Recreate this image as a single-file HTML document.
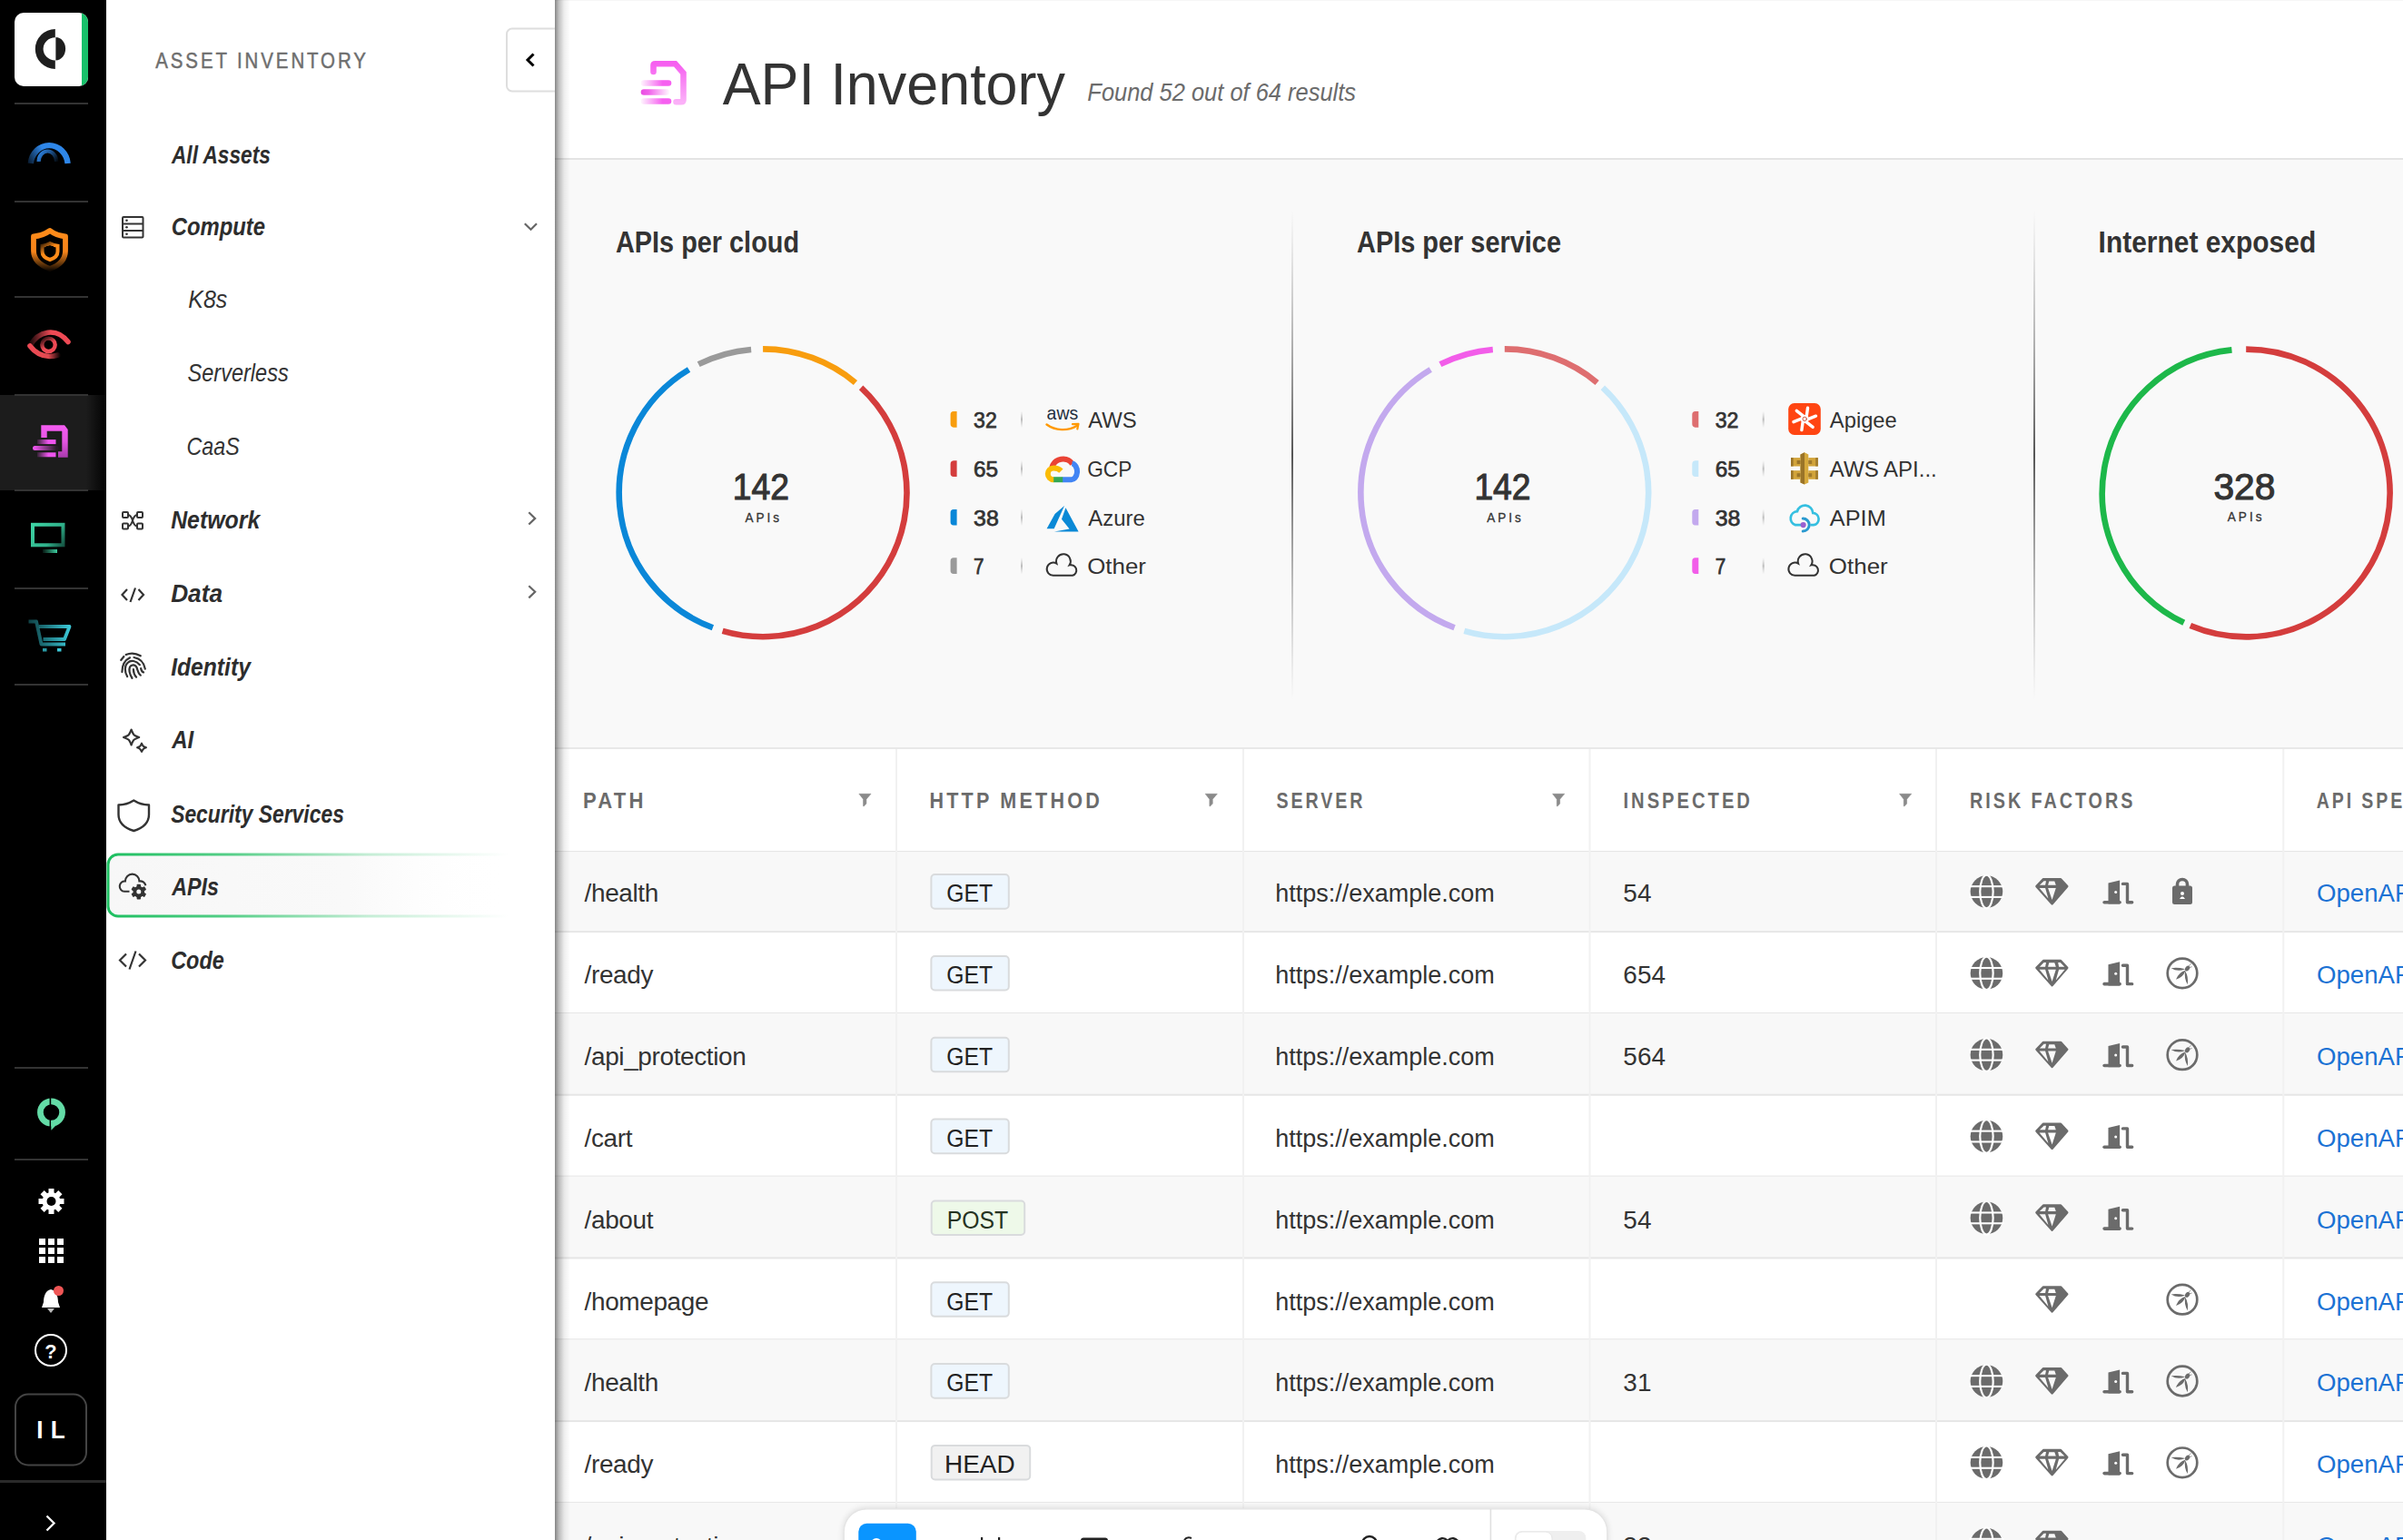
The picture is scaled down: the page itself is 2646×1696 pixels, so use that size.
<!DOCTYPE html>
<html><head><meta charset="utf-8"><title>API Inventory</title>
<style>html,body{margin:0;padding:0;background:#fff;overflow:hidden}svg{display:block}text{font-family:"Liberation Sans", sans-serif}</style></head>
<body><svg width="2646" height="1696" viewBox="0 0 2646 1696">
<rect x="0" y="0" width="117" height="1696" fill="#000" /><defs><linearGradient id="hl" gradientUnits="userSpaceOnUse" x1="95" x2="115" y1="0" y2="0"><stop offset="0" stop-color="#1c1c1c"/><stop offset="1" stop-color="#050505"/></linearGradient></defs><rect x="0" y="435" width="117" height="105" fill="url(#hl)" /><rect x="16" y="113" width="81" height="2" fill="#333" /><rect x="16" y="221" width="81" height="2" fill="#333" /><rect x="16" y="326" width="81" height="2" fill="#333" /><rect x="16" y="434" width="81" height="2" fill="#333" /><rect x="16" y="539" width="81" height="2" fill="#333" /><rect x="16" y="647" width="81" height="2" fill="#333" /><rect x="16" y="753" width="81" height="2" fill="#333" /><rect x="16" y="1175" width="81" height="2" fill="#333" /><rect x="16" y="1276" width="81" height="2" fill="#333" /><rect x="0" y="1630" width="117" height="3" fill="#2a2a2a" /><clipPath id="lg"><rect x="16" y="14" width="81" height="81" rx="10"/></clipPath><g clip-path="url(#lg)"><rect x="16" y="14" width="81" height="81" fill="#fff"/><rect x="90" y="14" width="7" height="81" fill="#18c06a"/></g><path d="M60.8 32 A22 22 0 0 0 60.8 76 V66.4 A13.2 12.6 0 0 1 60.8 41.2 Z" fill="#1e1e1e"/><path d="M61.4 41.1 A10.7 12.65 0 0 1 61.4 66.4 Z" fill="#1e1e1e"/><defs><linearGradient id="gb1" gradientUnits="userSpaceOnUse" x1="30" y1="180" x2="66" y2="160"><stop offset="0" stop-color="#2e86e8" stop-opacity="0.15"/><stop offset="0.55" stop-color="#2e86e8"/><stop offset="1" stop-color="#2e86e8"/></linearGradient><linearGradient id="gb2" gradientUnits="userSpaceOnUse" x1="44" y1="165" x2="63" y2="178"><stop offset="0" stop-color="#2e86e8"/><stop offset="0.5" stop-color="#2e86e8" stop-opacity="0.6"/><stop offset="1" stop-color="#2e86e8" stop-opacity="0.05"/></linearGradient><linearGradient id="go1" gradientUnits="userSpaceOnUse" x1="0" y1="252" x2="0" y2="298"><stop offset="0" stop-color="#ff8c1a"/><stop offset="0.55" stop-color="#f7841a"/><stop offset="1" stop-color="#ff8c1a" stop-opacity="0.05"/></linearGradient><linearGradient id="go2" gradientUnits="userSpaceOnUse" x1="46" y1="266" x2="60" y2="286"><stop offset="0" stop-color="#ff8c1a" stop-opacity="0.1"/><stop offset="0.5" stop-color="#ff8c1a"/><stop offset="1" stop-color="#ff8c1a"/></linearGradient><linearGradient id="gr1" gradientUnits="userSpaceOnUse" x1="34" y1="0" x2="74" y2="0"><stop offset="0" stop-color="#ee4a55" stop-opacity="0.15"/><stop offset="0.55" stop-color="#ee4a55"/><stop offset="1" stop-color="#ee4a55"/></linearGradient><linearGradient id="gr2" gradientUnits="userSpaceOnUse" x1="34" y1="0" x2="66" y2="0"><stop offset="0" stop-color="#ee4a55"/><stop offset="0.6" stop-color="#e04a50"/><stop offset="1" stop-color="#ee4a55" stop-opacity="0.05"/></linearGradient><linearGradient id="gr3" gradientUnits="userSpaceOnUse" x1="46" y1="371" x2="58" y2="389"><stop offset="0" stop-color="#ee4a55" stop-opacity="0.05"/><stop offset="0.55" stop-color="#ee4a55"/><stop offset="1" stop-color="#ee4a55"/></linearGradient><linearGradient id="gp1" gradientUnits="userSpaceOnUse" x1="0" y1="468" x2="0" y2="504"><stop offset="0" stop-color="#f55cf2"/><stop offset="0.5" stop-color="#e455e2"/><stop offset="1" stop-color="#a83aac"/></linearGradient><linearGradient id="gp2" gradientUnits="userSpaceOnUse" x1="40" y1="0" x2="62" y2="0"><stop offset="0" stop-color="#ee55ee" stop-opacity="0.05"/><stop offset="0.6" stop-color="#ee55ee"/><stop offset="1" stop-color="#ee55ee"/></linearGradient><linearGradient id="gp3" gradientUnits="userSpaceOnUse" x1="38" y1="0" x2="62" y2="0"><stop offset="0" stop-color="#ee55ee"/><stop offset="1" stop-color="#ee55ee" stop-opacity="0.05"/></linearGradient><linearGradient id="gm1" gradientUnits="userSpaceOnUse" x1="34" y1="576" x2="72" y2="606"><stop offset="0" stop-color="#3fd6a6"/><stop offset="0.6" stop-color="#2fb08a"/><stop offset="1" stop-color="#1a6a55" stop-opacity="0.6"/></linearGradient><linearGradient id="gm2" gradientUnits="userSpaceOnUse" x1="46" y1="0" x2="64" y2="0"><stop offset="0" stop-color="#3fd6a6" stop-opacity="0.05"/><stop offset="1" stop-color="#3fd6a6"/></linearGradient><linearGradient id="gc1" gradientUnits="userSpaceOnUse" x1="31" y1="0" x2="77" y2="0"><stop offset="0" stop-color="#2ab5c0" stop-opacity="0.35"/><stop offset="1" stop-color="#3cc8d8"/></linearGradient></defs><path d="M33.8 180 A20.5 22 0 0 1 74.6 180" fill="none" stroke="url(#gb1)" stroke-width="6.4"/><path d="M42.6 178 A9.8 11.5 0 0 1 62.2 178" fill="none" stroke="url(#gb2)" stroke-width="4.2"/><path d="M55 254 C50 257.5 43 260 37 260.5 V276 C37 286 45 292.5 55 296 C65 292.5 72 286 72 276 V260.5 C66 260 59.5 257.5 55 254 Z" fill="none" stroke="url(#go1)" stroke-width="5.8" stroke-linejoin="round"/><path d="M55 268 C52 269.5 49 270.5 46.5 270.8 V277 C46.5 281.5 50 284.5 55 286 C60 284.5 63.5 281.5 63.5 277 V270.8 C61 270.5 58 269.5 55 268 Z" fill="none" stroke="url(#go2)" stroke-width="4"/><path d="M50.5 271 H59 L55 279.5 Z" fill="#000"/><path d="M33 381 C42 364 62 360 75 376.5" fill="none" stroke="url(#gr1)" stroke-width="5.5" stroke-linecap="round"/><path d="M33 381 C40 390 50 395 64 391" fill="none" stroke="url(#gr2)" stroke-width="5.5" stroke-linecap="round"/><circle cx="53.5" cy="379.8" r="7.2" fill="none" stroke="url(#gr3)" stroke-width="4.4"/><circle cx="53" cy="378.5" r="3.2" fill="#000"/><path d="M48.5 482 V471.5 H69.5 L71.5 474 V500.5 H64" fill="none" stroke="url(#gp1)" stroke-width="6.4" stroke-linejoin="miter"/><path d="M41 486.6 H61.5" stroke="url(#gp2)" stroke-width="5"/><path d="M38.5 493.6 H62" stroke="url(#gp3)" stroke-width="5" stroke-linecap="round"/><path d="M41 500.8 H61.5" stroke="url(#gp2)" stroke-width="5"/><rect x="36" y="577.8" width="33.5" height="22.5" fill="none" stroke="url(#gm1)" stroke-width="4"/><path d="M47 607 H63" stroke="url(#gm2)" stroke-width="4"/><g fill="none" stroke="url(#gc1)" stroke-width="3.8" stroke-linejoin="round"><path d="M31.5 684.5 H40 L45.5 709.5 H72"/><path d="M43 690 H76.5 L71 704 H47.5"/></g><rect x="47" y="714" width="4.5" height="3.5" fill="#2a9aa5"/><rect x="63" y="714" width="4.5" height="3.5" fill="#3cc8d8"/><circle cx="56.5" cy="1225" r="12.1" fill="none" stroke="#63dba6" stroke-width="6.7"/><rect x="54.6" y="1209" width="1.6" height="9" fill="#000"/><rect x="54.6" y="1232" width="1.6" height="10" fill="#000"/><path d="M56.2 1234 L63.5 1234 L61 1240 L56.4 1244.8 Z" fill="#63dba6"/><g transform="translate(56.5 1323)"><circle r="10" fill="#fff"/><rect x="-3" y="-14" width="6" height="6" fill="#fff" transform="rotate(0)"/><rect x="-3" y="-14" width="6" height="6" fill="#fff" transform="rotate(45)"/><rect x="-3" y="-14" width="6" height="6" fill="#fff" transform="rotate(90)"/><rect x="-3" y="-14" width="6" height="6" fill="#fff" transform="rotate(135)"/><rect x="-3" y="-14" width="6" height="6" fill="#fff" transform="rotate(180)"/><rect x="-3" y="-14" width="6" height="6" fill="#fff" transform="rotate(225)"/><rect x="-3" y="-14" width="6" height="6" fill="#fff" transform="rotate(270)"/><rect x="-3" y="-14" width="6" height="6" fill="#fff" transform="rotate(315)"/><circle r="5" fill="#000"/></g><rect x="43" y="1364" width="7" height="7" fill="#fff" /><rect x="43" y="1374" width="7" height="7" fill="#fff" /><rect x="43" y="1384" width="7" height="7" fill="#fff" /><rect x="53" y="1364" width="7" height="7" fill="#fff" /><rect x="53" y="1374" width="7" height="7" fill="#fff" /><rect x="53" y="1384" width="7" height="7" fill="#fff" /><rect x="63" y="1364" width="7" height="7" fill="#fff" /><rect x="63" y="1374" width="7" height="7" fill="#fff" /><rect x="63" y="1384" width="7" height="7" fill="#fff" /><path d="M56 1420 C50 1421 48 1428 48 1434 L46 1440 H66 L64 1434 C64 1428 62 1421 56 1420 Z" fill="#fff"/><path d="M52 1441 H60 L56 1446 Z" fill="#bbb"/><circle cx="64.5" cy="1421.5" r="5.5" fill="#ee5555"/><circle cx="56" cy="1487" r="17" fill="none" stroke="#fff" stroke-width="2"/><rect x="17" y="1535.5" width="78" height="78" rx="14" fill="none" stroke="#444" stroke-width="2"/><path d="M51.5 1669.5 L59.5 1677.5 L51.5 1685.5" fill="none" stroke="#fff" stroke-width="2.3"/><rect x="117" y="0" width="494" height="1696" fill="#fff" /><rect x="558" y="31.5" width="70" height="69" rx="6" fill="#fff" stroke="#dedede" stroke-width="2"/><path d="M587.5 59.5 L581 66 L587.5 72.5" fill="none" stroke="#000" stroke-width="3"/><defs><linearGradient id="selb" gradientUnits="userSpaceOnUse" x1="118" x2="560" y1="0" y2="0"><stop offset="0" stop-color="#1dbf60"/><stop offset="0.3" stop-color="#1dbf60" stop-opacity="0.75"/><stop offset="0.65" stop-color="#1dbf60" stop-opacity="0.25"/><stop offset="1" stop-color="#1dbf60" stop-opacity="0"/></linearGradient><linearGradient id="self" gradientUnits="userSpaceOnUse" x1="118" x2="560" y1="0" y2="0"><stop offset="0" stop-color="#f7f7f7"/><stop offset="0.6" stop-color="#f9f9f9"/><stop offset="1" stop-color="#fff" stop-opacity="0"/></linearGradient></defs><path d="M130 941 H611 V1009 H130 A11 11 0 0 1 119 998 V952 A11 11 0 0 1 130 941 Z" fill="url(#self)" stroke="url(#selb)" stroke-width="3"/><g fill="none" stroke="#333" stroke-width="2"><rect x="135" y="239" width="22.5" height="22.5" rx="1"/><path d="M135 246.5 H157.5 M135 254 H157.5"/></g><g fill="#333"><circle cx="139.5" cy="242.7" r="1.3"/><circle cx="139.5" cy="250.2" r="1.3"/><circle cx="139.5" cy="257.8" r="1.3"/></g><path d="M577.8 246.3 L584.5 252.8 L591 246.3" fill="none" stroke="#666" stroke-width="2.2"/><g fill="none" stroke="#333" stroke-width="2"><rect x="135" y="564" width="6" height="6" rx="1"/><rect x="151" y="564" width="6" height="6" rx="1"/><rect x="135" y="576.5" width="6" height="6" rx="1"/><rect x="151" y="576.5" width="6" height="6" rx="1"/><path d="M141 567 C147 567 145 579.5 151 579.5 M141 579.5 C147 579.5 145 567 151 567"/></g><path d="M582.3 564.3 L589.2 570.9 L582.3 577.5" fill="none" stroke="#666" stroke-width="2.2"/><path d="M582.3 645.1999999999999 L589.2 651.8 L582.3 658.4" fill="none" stroke="#666" stroke-width="2.2"/><g fill="none" stroke="#333" stroke-width="2.2"><path d="M140 649 L134.5 655 L140 661 M152.5 649 L158 655 L152.5 661 M149 647.5 L143.5 663"/></g><g fill="none" stroke="#333" stroke-width="2.2" stroke-linecap="round"><path d="M138.7 721.1 Q146.5 717.5 154.8 722.3"/><path d="M133.2 727 L136.4 723"/><path d="M134.4 740.1 C134.4 733 137.5 727 143.1 724.3"/><path d="M147.5 724 C153 725 158.5 729 159.8 736.6"/><path d="M140.2 745.1 C137 740 137 733 140.5 730 C144 726.5 150 727.5 153.9 732.2"/><path d="M145.5 746.8 C142.5 742 142 737 143 734.5 C144.5 731.5 149 731.5 150.5 735 C152 739 152 742 154.8 743.6"/><path d="M146.9 737.2 C147 741 148 743.5 150.1 745.7"/><path d="M155.1 736 C155.5 738.5 156.5 740 158 740.4"/></g><path d="M144.6 803.5 C147.00799999999998 809.62 147.00799999999998 809.62 153.2 812 C147.00799999999998 814.38 147.00799999999998 814.38 144.6 820.5 C142.192 814.38 142.192 814.38 136.0 812 C142.192 809.62 142.192 809.62 144.6 803.5 Z" fill="none" stroke="#333" stroke-width="2.1" stroke-linejoin="round"/><path d="M156 818.6999999999999 C157.47 821.92 157.47 821.92 160.9 823.3 C157.47 824.68 157.47 824.68 156 827.9 C154.53 824.68 154.53 824.68 151.1 823.3 C154.53 821.92 154.53 821.92 156 818.6999999999999 Z" fill="none" stroke="#333" stroke-width="2.1" stroke-linejoin="round"/><path d="M147.3 881.5 C152 884.5 158 886.5 164 886.5 V897 C164 906 157 912 147.3 915 C137.6 912 130.5 906 130.5 897 V886.5 C136.5 886.5 142.5 884.5 147.3 881.5 Z" fill="none" stroke="#333" stroke-width="2.4" stroke-linejoin="round"/><path d="M142.5 981.8 H137 A5.6 5.6 0 0 1 137.9 970.4 A7.6 7.6 0 0 1 153.4 970.4 A6.2 6.2 0 0 1 160.4 975.3" fill="none" stroke="#333" stroke-width="2.1" stroke-linecap="butt"/><circle cx="152.8" cy="982.1" r="8.6" fill="#f8f8f8"/><g transform="translate(152.8 982.1)"><circle r="6.3" fill="#333"/><rect x="-2.2" y="-8.4" width="4.4" height="4" rx="0.8" fill="#333" transform="rotate(0)"/><rect x="-2.2" y="-8.4" width="4.4" height="4" rx="0.8" fill="#333" transform="rotate(60)"/><rect x="-2.2" y="-8.4" width="4.4" height="4" rx="0.8" fill="#333" transform="rotate(120)"/><rect x="-2.2" y="-8.4" width="4.4" height="4" rx="0.8" fill="#333" transform="rotate(180)"/><rect x="-2.2" y="-8.4" width="4.4" height="4" rx="0.8" fill="#333" transform="rotate(240)"/><rect x="-2.2" y="-8.4" width="4.4" height="4" rx="0.8" fill="#333" transform="rotate(300)"/><circle r="2.5" fill="#fafafa"/></g><g fill="none" stroke="#333" stroke-width="2.2"><path d="M139 1050.5 L132 1057.5 L139 1064.5 M153 1050.5 L160 1057.5 L153 1064.5 M149.5 1047.5 L142.5 1067.5"/></g><rect x="611" y="0" width="2035" height="174" fill="#fff" /><rect x="611" y="0" width="2035" height="1" fill="#f6f6f6" /><rect x="611" y="174" width="2035" height="2" fill="#e4e4e4" /><rect x="611" y="176" width="2035" height="647" fill="#f9f9f9" /><rect x="611" y="823" width="2035" height="2" fill="#e8e8e8" /><rect x="611" y="825" width="2035" height="112" fill="#fff" /><rect x="611" y="937" width="2035" height="2" fill="#e6e6e6" /><defs><linearGradient id="pk1" gradientUnits="userSpaceOnUse" x1="704" x2="738" y1="0" y2="0"><stop offset="0" stop-color="#f65ff0" stop-opacity="0"/><stop offset="0.75" stop-color="#f65ff0"/><stop offset="1" stop-color="#f65ff0"/></linearGradient><linearGradient id="pk2" gradientUnits="userSpaceOnUse" x1="704" x2="738" y1="0" y2="0"><stop offset="0" stop-color="#e848e0"/><stop offset="0.3" stop-color="#f060ea"/><stop offset="1" stop-color="#f65ff0" stop-opacity="0"/></linearGradient><linearGradient id="pk3" x1="0" x2="0" y1="0" y2="1"><stop offset="0" stop-color="#f65ff0"/><stop offset="1" stop-color="#fbb0f8"/></linearGradient></defs><path d="M719.5 79 V72 Q719.5 70.2 721.5 70.2 H743.5 L752.5 80.5 V110 Q752.5 112.3 750 112.3 H744.5" fill="none" stroke="url(#pk3)" stroke-width="6.6" stroke-linecap="round" stroke-linejoin="miter"/><path d="M709 91.5 H736" stroke="url(#pk1)" stroke-width="6.6" stroke-linecap="round"/><path d="M709 101.5 H734" stroke="url(#pk2)" stroke-width="6.6" stroke-linecap="round"/><path d="M709 111.5 H736" stroke="url(#pk1)" stroke-width="6.6" stroke-linecap="round"/><defs><linearGradient id="dv" x1="0" x2="0" y1="0" y2="1"><stop offset="0" stop-color="#999" stop-opacity="0"/><stop offset="0.5" stop-color="#555"/><stop offset="1" stop-color="#999" stop-opacity="0"/></linearGradient></defs><rect x="1422" y="231" width="2" height="540" fill="url(#dv)"/><rect x="2239" y="231" width="2" height="540" fill="url(#dv)"/><path d="M840.10 384.40 A158.4 158.4 0 0 1 941.92 421.46" fill="none" stroke="#f89d0e" stroke-width="6.6"/><path d="M948.13 426.95 A158.4 158.4 0 0 1 795.64 694.83" fill="none" stroke="#d43d3d" stroke-width="6.6"/><path d="M784.89 691.27 A158.4 158.4 0 0 1 758.52 407.02" fill="none" stroke="#0a87d8" stroke-width="6.6"/><path d="M769.17 401.17 A158.4 158.4 0 0 1 827.12 384.93" fill="none" stroke="#9a9a9a" stroke-width="6.6"/><path d="M1656.80 384.40 A158.4 158.4 0 0 1 1758.62 421.46" fill="none" stroke="#de6e70" stroke-width="6.6"/><path d="M1764.83 426.95 A158.4 158.4 0 0 1 1612.34 694.83" fill="none" stroke="#c6e8fa" stroke-width="6.6"/><path d="M1601.59 691.27 A158.4 158.4 0 0 1 1575.22 407.02" fill="none" stroke="#c3a9ee" stroke-width="6.6"/><path d="M1585.87 401.17 A158.4 158.4 0 0 1 1643.82 384.93" fill="none" stroke="#f25de9" stroke-width="6.6"/><path d="M2473.20 384.60 A158.4 158.4 0 1 1 2411.82 689.02" fill="none" stroke="#d43d3d" stroke-width="6.6"/><path d="M2404.76 685.85 A158.4 158.4 0 0 1 2457.47 385.38" fill="none" stroke="#1db84a" stroke-width="6.6"/><defs><linearGradient id="tk" x1="0" x2="0" y1="0" y2="1"><stop offset="0" stop-color="#ccc" stop-opacity="0"/><stop offset="0.5" stop-color="#bbb"/><stop offset="1" stop-color="#ccc" stop-opacity="0"/></linearGradient></defs><path d="M1053.6 453.0 V470.7 H1050 A3.6 3.6 0 0 1 1046.6 467.09999999999997 V456.59999999999997 A3.6 3.6 0 0 1 1050 453.0 Z" fill="#f89d0e"/><rect x="1124" y="452.7" width="2" height="18.5" fill="url(#tk)"/><path d="M1053.6 507.3 V525.0 H1050 A3.6 3.6 0 0 1 1046.6 521.4 V510.9 A3.6 3.6 0 0 1 1050 507.3 Z" fill="#d43d3d"/><rect x="1124" y="507.0" width="2" height="18.5" fill="url(#tk)"/><path d="M1053.6 560.9 V578.6 H1050 A3.6 3.6 0 0 1 1046.6 575.0 V564.5 A3.6 3.6 0 0 1 1050 560.9 Z" fill="#0a87d8"/><rect x="1124" y="560.6" width="2" height="18.5" fill="url(#tk)"/><path d="M1053.6 614.3 V632.0 H1050 A3.6 3.6 0 0 1 1046.6 628.4 V617.9 A3.6 3.6 0 0 1 1050 614.3 Z" fill="#9a9a9a"/><rect x="1124" y="614.0" width="2" height="18.5" fill="url(#tk)"/><path d="M1870.3 453.0 V470.7 H1866.7 A3.6 3.6 0 0 1 1863.3 467.09999999999997 V456.59999999999997 A3.6 3.6 0 0 1 1866.7 453.0 Z" fill="#de6e70"/><rect x="1940.7" y="452.7" width="2" height="18.5" fill="url(#tk)"/><path d="M1870.3 507.3 V525.0 H1866.7 A3.6 3.6 0 0 1 1863.3 521.4 V510.9 A3.6 3.6 0 0 1 1866.7 507.3 Z" fill="#c6e8fa"/><rect x="1940.7" y="507.0" width="2" height="18.5" fill="url(#tk)"/><path d="M1870.3 560.9 V578.6 H1866.7 A3.6 3.6 0 0 1 1863.3 575.0 V564.5 A3.6 3.6 0 0 1 1866.7 560.9 Z" fill="#c3a9ee"/><rect x="1940.7" y="560.6" width="2" height="18.5" fill="url(#tk)"/><path d="M1870.3 614.3 V632.0 H1866.7 A3.6 3.6 0 0 1 1863.3 628.4 V617.9 A3.6 3.6 0 0 1 1866.7 614.3 Z" fill="#f25de9"/><rect x="1940.7" y="614.0" width="2" height="18.5" fill="url(#tk)"/><text x="1152.6" y="462" font-size="21" fill="#232f3e" textLength="34.6" lengthAdjust="spacingAndGlyphs">aws</text><path d="M1152.5 467.5 C1162 474.5 1176 475 1185.5 469" fill="none" stroke="#f90" stroke-width="2.4" stroke-linecap="round"/><path d="M1181 467.2 L1187.5 466.8 L1186.3 472.5" fill="none" stroke="#f90" stroke-width="2.2" stroke-linecap="round" stroke-linejoin="round"/><g fill="none" stroke-width="6"><path d="M1158.3 515 A12.6 12.6 0 0 1 1180.9 511" stroke="#ea4335"/><path d="M1180.4 510.4 A6.3 8.9 0 0 1 1179 528.2 H1169.8" stroke="#4285f4"/><path d="M1170.2 528.2 H1159.8" stroke="#34a853"/><path d="M1160.2 528.2 A6.4 6.4 0 0 1 1160.2 515.4 C1163.6 515.4 1166.2 516.3 1168.4 518.6" stroke="#fbbc05"/></g><path transform="translate(1152.6 557) scale(0.601)" d="M32.368 0l-17.468 15.145L0 41.895h13.437L32.368 0zm2.323 3.543L27.237 24.551l14.291 17.956L13.8 47.271h44.442L34.691 3.543z" fill="#0a89d6"/><path transform="translate(0.00 0.00)" d="M1160.3 633.8 H1181 A5.9 5.9 0 1 0 1177.6 622.4 A7.9 7.9 0 1 0 1163.4 620.6 A7.1 7.1 0 1 0 1160.3 633.8 Z" fill="none" stroke="#333" stroke-width="2.0"/><rect x="1969.2" y="444.1" width="35.6" height="34.9" rx="6.5" fill="#ff4512"/><g transform="translate(1987.2 461.4)" stroke="#fff" stroke-width="3.4" stroke-linecap="round"><path d="M1.58 0.22 L3.34 -12.25"/><path d="M0.60 1.48 L12.28 -3.24"/><path d="M-0.99 1.26 L8.94 9.02"/><path d="M-1.58 -0.22 L-3.34 12.25"/><path d="M-0.60 -1.48 L-12.28 3.24"/><path d="M0.99 -1.26 L-8.94 -9.02"/><circle r="4.5" fill="#fff" stroke="none"/><circle r="2.2" fill="none" stroke="#c8452a" stroke-width="0.9"/></g><g><path d="M1982.5 500.6 L1987 498.3 L1991.3 500.6 V531.4 L1987 533.6 L1982.5 531.4 Z" fill="#d6a93c"/><path d="M1982.5 500.6 L1987 498.3 V533.6 L1982.5 531.4 Z" fill="#9a7428"/><rect x="1972" y="504.1" width="10.5" height="9.4" fill="#d2a43a"/><rect x="1972" y="504.1" width="2.6" height="9.4" fill="#9a7428"/><rect x="1978.6" y="507" width="3.9" height="4" fill="#9a7428"/><rect x="1972" y="518.2" width="10.5" height="9.6" fill="#d2a43a"/><rect x="1972" y="518.2" width="2.6" height="9.6" fill="#9a7428"/><rect x="1978.6" y="521.2" width="3.9" height="4.1" fill="#9a7428"/><rect x="1991.3" y="504.1" width="10.5" height="9.4" fill="#d2a43a"/><rect x="1999.2" y="504.1" width="2.6" height="9.4" fill="#a07a2c"/><rect x="1991.3" y="507" width="3.9" height="4" fill="#a07a2c"/><rect x="1991.3" y="518.2" width="10.5" height="9.6" fill="#d2a43a"/><rect x="1999.2" y="518.2" width="2.6" height="9.6" fill="#a07a2c"/><rect x="1991.3" y="521.2" width="3.9" height="4.1" fill="#a07a2c"/></g><path d="M1983 578.2 H1977 A7.7 7.7 0 0 1 1979 563.2 A8.8 8.8 0 0 1 1996.3 564.9 A6.7 6.7 0 0 1 1997 578.2 H1993.5" fill="none" stroke="#35bfe0" stroke-width="2.7"/><path d="M1985.2 571.1 A7 7 0 0 1 1985.2 585.1" fill="none" stroke="#2a9ad0" stroke-width="3" stroke-linecap="round"/><circle cx="1985.6" cy="578.1" r="3.1" fill="#9a5fd0"/><path transform="translate(816.70 0.00)" d="M1160.3 633.8 H1181 A5.9 5.9 0 1 0 1177.6 622.4 A7.9 7.9 0 1 0 1163.4 620.6 A7.1 7.1 0 1 0 1160.3 633.8 Z" fill="none" stroke="#333" stroke-width="2.0"/><rect x="611" y="938.10" width="2035" height="88.00" fill="#f8f8f8" /><rect x="611" y="1025.10" width="2035" height="2" fill="#e6e6e6" /><rect x="611" y="1114.93" width="2035" height="2" fill="#e6e6e6" /><rect x="611" y="1115.93" width="2035" height="89.83" fill="#f8f8f8" /><rect x="611" y="1204.76" width="2035" height="2" fill="#e6e6e6" /><rect x="611" y="1294.59" width="2035" height="2" fill="#e6e6e6" /><rect x="611" y="1295.59" width="2035" height="89.83" fill="#f8f8f8" /><rect x="611" y="1384.42" width="2035" height="2" fill="#e6e6e6" /><rect x="611" y="1474.25" width="2035" height="2" fill="#e6e6e6" /><rect x="611" y="1475.25" width="2035" height="89.83" fill="#f8f8f8" /><rect x="611" y="1564.08" width="2035" height="2" fill="#e6e6e6" /><rect x="611" y="1653.91" width="2035" height="2" fill="#e6e6e6" /><rect x="611" y="1654.91" width="2035" height="89.83" fill="#f8f8f8" /><rect x="611" y="1743.74" width="2035" height="2" fill="#e6e6e6" /><rect x="986" y="825" width="2" height="871" fill="#f1f1f1" /><rect x="1368" y="825" width="2" height="871" fill="#f1f1f1" /><rect x="1749.5" y="825" width="2" height="871" fill="#f1f1f1" /><rect x="2131" y="825" width="2" height="871" fill="#f1f1f1" /><rect x="2513.3" y="825" width="2" height="871" fill="#f1f1f1" /><path d="M945.9 874.3 H959.0 L953.9 880.2 V885.1 L951.4 887.8 L950.6 887.8 V880.2 Z" fill="#8a8a8a" stroke="#8a8a8a" stroke-width="0.6" stroke-linejoin="round"/><path d="M1327.2 874.3 H1340.3 L1335.2 880.2 V885.1 L1332.7 887.8 L1331.9 887.8 V880.2 Z" fill="#8a8a8a" stroke="#8a8a8a" stroke-width="0.6" stroke-linejoin="round"/><path d="M1709.6 874.3 H1722.7 L1717.6 880.2 V885.1 L1715.1 887.8 L1714.3 887.8 V880.2 Z" fill="#8a8a8a" stroke="#8a8a8a" stroke-width="0.6" stroke-linejoin="round"/><path d="M2091.6 874.3 H2104.7 L2099.6 880.2 V885.1 L2097.1 887.8 L2096.3 887.8 V880.2 Z" fill="#8a8a8a" stroke="#8a8a8a" stroke-width="0.6" stroke-linejoin="round"/><rect x="1025.40" y="963.10" width="85.40" height="37.60" rx="4" fill="#eef6fd" stroke="#d9dbdd" stroke-width="2"/><g transform="translate(2187.45 981.9999999999999)"><circle r="17.8" fill="#6b6b6b"/><ellipse rx="7.2" ry="18.3" fill="none" stroke="#fff" stroke-width="2.2"/><rect x="-19" y="-6.9" width="38" height="2.1" fill="#fff"/><rect x="-19" y="4.9" width="38" height="2.1" fill="#fff"/><circle r="19.2" fill="none" stroke="#fff" stroke-width="2.6" stroke-opacity="0"/></g><g transform="translate(0.00 -0.00)"><path d="M2250 968.2 H2269.1 L2276.3 976.1 L2259.6 995.4 L2242.4 976.1 Z" fill="#6b6b6b" stroke="#6b6b6b" stroke-width="2.4" stroke-linejoin="round"/><path d="M2245.9 974.8 L2250.6 970.2 H2253 L2252.1 974.8 Z M2255.1 974.8 L2256.3 970.5 H2262.3 L2263.8 974.8 Z M2245.6 977.9 H2252.1 L2255.4 989.6 Z M2255.1 977.9 H2263.8 L2259.6 991.1 Z" fill="#f8f8f8"/></g><g transform="translate(2315.5 968.3999999999999)"><path d="M6 27.2 V4 L18.6 1 V27.2 Z" fill="#6b6b6b"/><path d="M1.6 25.4 H18.6" stroke="#6b6b6b" stroke-width="3.6" stroke-linecap="round"/><path d="M22 5 H27 V25.4 H32.2" fill="none" stroke="#6b6b6b" stroke-width="3.4" stroke-linecap="round" stroke-linejoin="round"/><circle cx="14.2" cy="14" r="1.5" fill="#fff"/></g><g transform="translate(2403 982.4999999999999)"><path d="M-5.5 -6 V-8.5 A5.5 5.5 0 0 1 5.5 -8.5 V-6" fill="none" stroke="#6b6b6b" stroke-width="3.6"/><rect x="-11" y="-7" width="22" height="20.5" rx="2.5" fill="#6b6b6b"/><circle cy="1.5" r="2" fill="#fff"/><path d="M-3 7.5 Q0 2 3 7.5 Z" fill="#fff"/></g><rect x="1025.40" y="1052.93" width="85.40" height="37.60" rx="4" fill="#eef6fd" stroke="#d9dbdd" stroke-width="2"/><g transform="translate(2187.45 1071.83)"><circle r="17.8" fill="#6b6b6b"/><ellipse rx="7.2" ry="18.3" fill="none" stroke="#fff" stroke-width="2.2"/><rect x="-19" y="-6.9" width="38" height="2.1" fill="#fff"/><rect x="-19" y="4.9" width="38" height="2.1" fill="#fff"/><circle r="19.2" fill="none" stroke="#fff" stroke-width="2.6" stroke-opacity="0"/></g><g transform="translate(0.00 89.83)"><path d="M2250 968.2 H2269.1 L2276.3 976.1 L2259.6 995.4 L2242.4 976.1 Z" fill="#6b6b6b" stroke="#6b6b6b" stroke-width="2.4" stroke-linejoin="round"/><path d="M2245.9 974.8 L2250.6 970.2 H2253 L2252.1 974.8 Z M2255.1 974.8 L2256.3 970.5 H2262.3 L2263.8 974.8 Z M2245.6 977.9 H2252.1 L2255.4 989.6 Z M2255.1 977.9 H2263.8 L2259.6 991.1 Z M2273.3 974.8 L2268.6 970.2 H2266.2 L2267.1 974.8 Z M2273.6 977.9 H2267.1 L2263.8 989.6 Z" fill="#ffffff"/></g><g transform="translate(2315.5 1058.23)"><path d="M6 27.2 V4 L18.6 1 V27.2 Z" fill="#6b6b6b"/><path d="M1.6 25.4 H18.6" stroke="#6b6b6b" stroke-width="3.6" stroke-linecap="round"/><path d="M22 5 H27 V25.4 H32.2" fill="none" stroke="#6b6b6b" stroke-width="3.4" stroke-linecap="round" stroke-linejoin="round"/><circle cx="14.2" cy="14" r="1.5" fill="#fff"/></g><g transform="translate(0.00 -0.07)"><circle cx="2403" cy="1071.9" r="16.3" fill="none" stroke="#6b6b6b" stroke-width="2.7"/><path d="M2390.7 1066.2 Q2398 1065.2 2406.2 1067.2 Q2398 1070.8 2390.7 1066.2 Z" fill="#6b6b6b"/><path d="M2396 1078.8 Q2399 1071 2406.6 1068.6 Q2404.5 1076.2 2396 1078.8 Z" fill="#6b6b6b"/><path d="M2406.2 1069.3 Q2410 1076 2408.8 1084.2 Q2404.6 1077 2406.2 1069.3 Z" fill="#6b6b6b"/><ellipse cx="2408.6" cy="1066.6" rx="2.3" ry="3.2" transform="rotate(35 2408.6 1066.6)" fill="#6b6b6b"/><path d="M2410 1064 L2412.5 1061.5 M2411 1065.5 L2413.5 1064.8" stroke="#6b6b6b" stroke-width="0.7"/></g><rect x="1025.40" y="1142.76" width="85.40" height="37.60" rx="4" fill="#eef6fd" stroke="#d9dbdd" stroke-width="2"/><g transform="translate(2187.45 1161.66)"><circle r="17.8" fill="#6b6b6b"/><ellipse rx="7.2" ry="18.3" fill="none" stroke="#fff" stroke-width="2.2"/><rect x="-19" y="-6.9" width="38" height="2.1" fill="#fff"/><rect x="-19" y="4.9" width="38" height="2.1" fill="#fff"/><circle r="19.2" fill="none" stroke="#fff" stroke-width="2.6" stroke-opacity="0"/></g><g transform="translate(0.00 179.66)"><path d="M2250 968.2 H2269.1 L2276.3 976.1 L2259.6 995.4 L2242.4 976.1 Z" fill="#6b6b6b" stroke="#6b6b6b" stroke-width="2.4" stroke-linejoin="round"/><path d="M2245.9 974.8 L2250.6 970.2 H2253 L2252.1 974.8 Z M2255.1 974.8 L2256.3 970.5 H2262.3 L2263.8 974.8 Z M2245.6 977.9 H2252.1 L2255.4 989.6 Z M2255.1 977.9 H2263.8 L2259.6 991.1 Z" fill="#f8f8f8"/></g><g transform="translate(2315.5 1148.0600000000002)"><path d="M6 27.2 V4 L18.6 1 V27.2 Z" fill="#6b6b6b"/><path d="M1.6 25.4 H18.6" stroke="#6b6b6b" stroke-width="3.6" stroke-linecap="round"/><path d="M22 5 H27 V25.4 H32.2" fill="none" stroke="#6b6b6b" stroke-width="3.4" stroke-linecap="round" stroke-linejoin="round"/><circle cx="14.2" cy="14" r="1.5" fill="#fff"/></g><g transform="translate(0.00 89.76)"><circle cx="2403" cy="1071.9" r="16.3" fill="none" stroke="#6b6b6b" stroke-width="2.7"/><path d="M2390.7 1066.2 Q2398 1065.2 2406.2 1067.2 Q2398 1070.8 2390.7 1066.2 Z" fill="#6b6b6b"/><path d="M2396 1078.8 Q2399 1071 2406.6 1068.6 Q2404.5 1076.2 2396 1078.8 Z" fill="#6b6b6b"/><path d="M2406.2 1069.3 Q2410 1076 2408.8 1084.2 Q2404.6 1077 2406.2 1069.3 Z" fill="#6b6b6b"/><ellipse cx="2408.6" cy="1066.6" rx="2.3" ry="3.2" transform="rotate(35 2408.6 1066.6)" fill="#6b6b6b"/><path d="M2410 1064 L2412.5 1061.5 M2411 1065.5 L2413.5 1064.8" stroke="#6b6b6b" stroke-width="0.7"/></g><rect x="1025.40" y="1232.59" width="85.40" height="37.60" rx="4" fill="#eef6fd" stroke="#d9dbdd" stroke-width="2"/><g transform="translate(2187.45 1251.49)"><circle r="17.8" fill="#6b6b6b"/><ellipse rx="7.2" ry="18.3" fill="none" stroke="#fff" stroke-width="2.2"/><rect x="-19" y="-6.9" width="38" height="2.1" fill="#fff"/><rect x="-19" y="4.9" width="38" height="2.1" fill="#fff"/><circle r="19.2" fill="none" stroke="#fff" stroke-width="2.6" stroke-opacity="0"/></g><g transform="translate(0.00 269.49)"><path d="M2250 968.2 H2269.1 L2276.3 976.1 L2259.6 995.4 L2242.4 976.1 Z" fill="#6b6b6b" stroke="#6b6b6b" stroke-width="2.4" stroke-linejoin="round"/><path d="M2245.9 974.8 L2250.6 970.2 H2253 L2252.1 974.8 Z M2255.1 974.8 L2256.3 970.5 H2262.3 L2263.8 974.8 Z M2245.6 977.9 H2252.1 L2255.4 989.6 Z M2255.1 977.9 H2263.8 L2259.6 991.1 Z" fill="#ffffff"/></g><g transform="translate(2315.5 1237.89)"><path d="M6 27.2 V4 L18.6 1 V27.2 Z" fill="#6b6b6b"/><path d="M1.6 25.4 H18.6" stroke="#6b6b6b" stroke-width="3.6" stroke-linecap="round"/><path d="M22 5 H27 V25.4 H32.2" fill="none" stroke="#6b6b6b" stroke-width="3.4" stroke-linecap="round" stroke-linejoin="round"/><circle cx="14.2" cy="14" r="1.5" fill="#fff"/></g><rect x="1025.70" y="1322.42" width="102.50" height="37.60" rx="4" fill="#eef9e9" stroke="#d9dbdd" stroke-width="2"/><g transform="translate(2187.45 1341.32)"><circle r="17.8" fill="#6b6b6b"/><ellipse rx="7.2" ry="18.3" fill="none" stroke="#fff" stroke-width="2.2"/><rect x="-19" y="-6.9" width="38" height="2.1" fill="#fff"/><rect x="-19" y="4.9" width="38" height="2.1" fill="#fff"/><circle r="19.2" fill="none" stroke="#fff" stroke-width="2.6" stroke-opacity="0"/></g><g transform="translate(0.00 359.32)"><path d="M2250 968.2 H2269.1 L2276.3 976.1 L2259.6 995.4 L2242.4 976.1 Z" fill="#6b6b6b" stroke="#6b6b6b" stroke-width="2.4" stroke-linejoin="round"/><path d="M2245.9 974.8 L2250.6 970.2 H2253 L2252.1 974.8 Z M2255.1 974.8 L2256.3 970.5 H2262.3 L2263.8 974.8 Z M2245.6 977.9 H2252.1 L2255.4 989.6 Z M2255.1 977.9 H2263.8 L2259.6 991.1 Z" fill="#f8f8f8"/></g><g transform="translate(2315.5 1327.72)"><path d="M6 27.2 V4 L18.6 1 V27.2 Z" fill="#6b6b6b"/><path d="M1.6 25.4 H18.6" stroke="#6b6b6b" stroke-width="3.6" stroke-linecap="round"/><path d="M22 5 H27 V25.4 H32.2" fill="none" stroke="#6b6b6b" stroke-width="3.4" stroke-linecap="round" stroke-linejoin="round"/><circle cx="14.2" cy="14" r="1.5" fill="#fff"/></g><rect x="1025.40" y="1412.25" width="85.40" height="37.60" rx="4" fill="#eef6fd" stroke="#d9dbdd" stroke-width="2"/><g transform="translate(0.00 449.15)"><path d="M2250 968.2 H2269.1 L2276.3 976.1 L2259.6 995.4 L2242.4 976.1 Z" fill="#6b6b6b" stroke="#6b6b6b" stroke-width="2.4" stroke-linejoin="round"/><path d="M2245.9 974.8 L2250.6 970.2 H2253 L2252.1 974.8 Z M2255.1 974.8 L2256.3 970.5 H2262.3 L2263.8 974.8 Z M2245.6 977.9 H2252.1 L2255.4 989.6 Z M2255.1 977.9 H2263.8 L2259.6 991.1 Z" fill="#ffffff"/></g><g transform="translate(0.00 359.25)"><circle cx="2403" cy="1071.9" r="16.3" fill="none" stroke="#6b6b6b" stroke-width="2.7"/><path d="M2390.7 1066.2 Q2398 1065.2 2406.2 1067.2 Q2398 1070.8 2390.7 1066.2 Z" fill="#6b6b6b"/><path d="M2396 1078.8 Q2399 1071 2406.6 1068.6 Q2404.5 1076.2 2396 1078.8 Z" fill="#6b6b6b"/><path d="M2406.2 1069.3 Q2410 1076 2408.8 1084.2 Q2404.6 1077 2406.2 1069.3 Z" fill="#6b6b6b"/><ellipse cx="2408.6" cy="1066.6" rx="2.3" ry="3.2" transform="rotate(35 2408.6 1066.6)" fill="#6b6b6b"/><path d="M2410 1064 L2412.5 1061.5 M2411 1065.5 L2413.5 1064.8" stroke="#6b6b6b" stroke-width="0.7"/></g><rect x="1025.40" y="1502.08" width="85.40" height="37.60" rx="4" fill="#eef6fd" stroke="#d9dbdd" stroke-width="2"/><g transform="translate(2187.45 1520.98)"><circle r="17.8" fill="#6b6b6b"/><ellipse rx="7.2" ry="18.3" fill="none" stroke="#fff" stroke-width="2.2"/><rect x="-19" y="-6.9" width="38" height="2.1" fill="#fff"/><rect x="-19" y="4.9" width="38" height="2.1" fill="#fff"/><circle r="19.2" fill="none" stroke="#fff" stroke-width="2.6" stroke-opacity="0"/></g><g transform="translate(0.00 538.98)"><path d="M2250 968.2 H2269.1 L2276.3 976.1 L2259.6 995.4 L2242.4 976.1 Z" fill="#6b6b6b" stroke="#6b6b6b" stroke-width="2.4" stroke-linejoin="round"/><path d="M2245.9 974.8 L2250.6 970.2 H2253 L2252.1 974.8 Z M2255.1 974.8 L2256.3 970.5 H2262.3 L2263.8 974.8 Z M2245.6 977.9 H2252.1 L2255.4 989.6 Z M2255.1 977.9 H2263.8 L2259.6 991.1 Z" fill="#f8f8f8"/></g><g transform="translate(2315.5 1507.38)"><path d="M6 27.2 V4 L18.6 1 V27.2 Z" fill="#6b6b6b"/><path d="M1.6 25.4 H18.6" stroke="#6b6b6b" stroke-width="3.6" stroke-linecap="round"/><path d="M22 5 H27 V25.4 H32.2" fill="none" stroke="#6b6b6b" stroke-width="3.4" stroke-linecap="round" stroke-linejoin="round"/><circle cx="14.2" cy="14" r="1.5" fill="#fff"/></g><g transform="translate(0.00 449.08)"><circle cx="2403" cy="1071.9" r="16.3" fill="none" stroke="#6b6b6b" stroke-width="2.7"/><path d="M2390.7 1066.2 Q2398 1065.2 2406.2 1067.2 Q2398 1070.8 2390.7 1066.2 Z" fill="#6b6b6b"/><path d="M2396 1078.8 Q2399 1071 2406.6 1068.6 Q2404.5 1076.2 2396 1078.8 Z" fill="#6b6b6b"/><path d="M2406.2 1069.3 Q2410 1076 2408.8 1084.2 Q2404.6 1077 2406.2 1069.3 Z" fill="#6b6b6b"/><ellipse cx="2408.6" cy="1066.6" rx="2.3" ry="3.2" transform="rotate(35 2408.6 1066.6)" fill="#6b6b6b"/><path d="M2410 1064 L2412.5 1061.5 M2411 1065.5 L2413.5 1064.8" stroke="#6b6b6b" stroke-width="0.7"/></g><rect x="1025.70" y="1591.91" width="108.50" height="37.60" rx="4" fill="#f1f1f1" stroke="#d9dbdd" stroke-width="2"/><g transform="translate(2187.45 1610.81)"><circle r="17.8" fill="#6b6b6b"/><ellipse rx="7.2" ry="18.3" fill="none" stroke="#fff" stroke-width="2.2"/><rect x="-19" y="-6.9" width="38" height="2.1" fill="#fff"/><rect x="-19" y="4.9" width="38" height="2.1" fill="#fff"/><circle r="19.2" fill="none" stroke="#fff" stroke-width="2.6" stroke-opacity="0"/></g><g transform="translate(0.00 628.81)"><path d="M2250 968.2 H2269.1 L2276.3 976.1 L2259.6 995.4 L2242.4 976.1 Z" fill="#6b6b6b" stroke="#6b6b6b" stroke-width="2.4" stroke-linejoin="round"/><path d="M2245.9 974.8 L2250.6 970.2 H2253 L2252.1 974.8 Z M2255.1 974.8 L2256.3 970.5 H2262.3 L2263.8 974.8 Z M2245.6 977.9 H2252.1 L2255.4 989.6 Z M2255.1 977.9 H2263.8 L2259.6 991.1 Z M2273.3 974.8 L2268.6 970.2 H2266.2 L2267.1 974.8 Z M2273.6 977.9 H2267.1 L2263.8 989.6 Z" fill="#ffffff"/></g><g transform="translate(2315.5 1597.21)"><path d="M6 27.2 V4 L18.6 1 V27.2 Z" fill="#6b6b6b"/><path d="M1.6 25.4 H18.6" stroke="#6b6b6b" stroke-width="3.6" stroke-linecap="round"/><path d="M22 5 H27 V25.4 H32.2" fill="none" stroke="#6b6b6b" stroke-width="3.4" stroke-linecap="round" stroke-linejoin="round"/><circle cx="14.2" cy="14" r="1.5" fill="#fff"/></g><g transform="translate(0.00 538.91)"><circle cx="2403" cy="1071.9" r="16.3" fill="none" stroke="#6b6b6b" stroke-width="2.7"/><path d="M2390.7 1066.2 Q2398 1065.2 2406.2 1067.2 Q2398 1070.8 2390.7 1066.2 Z" fill="#6b6b6b"/><path d="M2396 1078.8 Q2399 1071 2406.6 1068.6 Q2404.5 1076.2 2396 1078.8 Z" fill="#6b6b6b"/><path d="M2406.2 1069.3 Q2410 1076 2408.8 1084.2 Q2404.6 1077 2406.2 1069.3 Z" fill="#6b6b6b"/><ellipse cx="2408.6" cy="1066.6" rx="2.3" ry="3.2" transform="rotate(35 2408.6 1066.6)" fill="#6b6b6b"/><path d="M2410 1064 L2412.5 1061.5 M2411 1065.5 L2413.5 1064.8" stroke="#6b6b6b" stroke-width="0.7"/></g><rect x="1025.40" y="1681.74" width="85.40" height="37.60" rx="4" fill="#eef6fd" stroke="#d9dbdd" stroke-width="2"/><g transform="translate(2187.45 1700.6399999999999)"><circle r="17.8" fill="#6b6b6b"/><ellipse rx="7.2" ry="18.3" fill="none" stroke="#fff" stroke-width="2.2"/><rect x="-19" y="-6.9" width="38" height="2.1" fill="#fff"/><rect x="-19" y="4.9" width="38" height="2.1" fill="#fff"/><circle r="19.2" fill="none" stroke="#fff" stroke-width="2.6" stroke-opacity="0"/></g><g transform="translate(0.00 718.64)"><path d="M2250 968.2 H2269.1 L2276.3 976.1 L2259.6 995.4 L2242.4 976.1 Z" fill="#6b6b6b" stroke="#6b6b6b" stroke-width="2.4" stroke-linejoin="round"/><path d="M2245.9 974.8 L2250.6 970.2 H2253 L2252.1 974.8 Z M2255.1 974.8 L2256.3 970.5 H2262.3 L2263.8 974.8 Z M2245.6 977.9 H2252.1 L2255.4 989.6 Z M2255.1 977.9 H2263.8 L2259.6 991.1 Z" fill="#f8f8f8"/></g><text x="643.56" y="993.40" font-size="27.93" fill="#333" letter-spacing="-0.35">/health</text><text x="1042.37" y="993.40" font-size="27.62" fill="#222" textLength="50.86" lengthAdjust="spacingAndGlyphs">GET</text><text x="1404.36" y="993.40" font-size="27.93" fill="#333" textLength="241.48" lengthAdjust="spacingAndGlyphs">https://example.com</text><text x="1787.36" y="993.40" font-size="27.91" fill="#333">54</text><text x="2550.97" y="993.40" font-size="27.62" fill="#1b72d4">OpenAPI</text><text x="643.56" y="1083.23" font-size="27.93" fill="#333" letter-spacing="-0.35">/ready</text><text x="1042.37" y="1083.23" font-size="27.62" fill="#222" textLength="50.86" lengthAdjust="spacingAndGlyphs">GET</text><text x="1404.36" y="1083.23" font-size="27.93" fill="#333" textLength="241.48" lengthAdjust="spacingAndGlyphs">https://example.com</text><text x="1787.36" y="1083.23" font-size="27.91" fill="#333">654</text><text x="2550.97" y="1083.23" font-size="27.62" fill="#1b72d4">OpenAPI</text><text x="643.56" y="1173.06" font-size="27.93" fill="#333" letter-spacing="-0.35">/api_protection</text><text x="1042.37" y="1173.06" font-size="27.62" fill="#222" textLength="50.86" lengthAdjust="spacingAndGlyphs">GET</text><text x="1404.36" y="1173.06" font-size="27.93" fill="#333" textLength="241.48" lengthAdjust="spacingAndGlyphs">https://example.com</text><text x="1787.36" y="1173.06" font-size="27.91" fill="#333">564</text><text x="2550.97" y="1173.06" font-size="27.62" fill="#1b72d4">OpenAPI</text><text x="643.56" y="1262.89" font-size="27.93" fill="#333" letter-spacing="-0.35">/cart</text><text x="1042.37" y="1262.89" font-size="27.62" fill="#222" textLength="50.86" lengthAdjust="spacingAndGlyphs">GET</text><text x="1404.36" y="1262.89" font-size="27.93" fill="#333" textLength="241.48" lengthAdjust="spacingAndGlyphs">https://example.com</text><text x="2550.97" y="1262.89" font-size="27.62" fill="#1b72d4">OpenAPI</text><text x="643.56" y="1352.72" font-size="27.93" fill="#333" letter-spacing="-0.35">/about</text><text x="1042.77" y="1352.72" font-size="27.62" fill="#263322" textLength="67.46" lengthAdjust="spacingAndGlyphs">POST</text><text x="1404.36" y="1352.72" font-size="27.93" fill="#333" textLength="241.48" lengthAdjust="spacingAndGlyphs">https://example.com</text><text x="1787.36" y="1352.72" font-size="27.91" fill="#333">54</text><text x="2550.97" y="1352.72" font-size="27.62" fill="#1b72d4">OpenAPI</text><text x="643.56" y="1442.55" font-size="27.93" fill="#333" letter-spacing="-0.35">/homepage</text><text x="1042.37" y="1442.55" font-size="27.62" fill="#222" textLength="50.86" lengthAdjust="spacingAndGlyphs">GET</text><text x="1404.36" y="1442.55" font-size="27.93" fill="#333" textLength="241.48" lengthAdjust="spacingAndGlyphs">https://example.com</text><text x="2550.97" y="1442.55" font-size="27.62" fill="#1b72d4">OpenAPI</text><text x="643.56" y="1532.38" font-size="27.93" fill="#333" letter-spacing="-0.35">/health</text><text x="1042.37" y="1532.38" font-size="27.62" fill="#222" textLength="50.86" lengthAdjust="spacingAndGlyphs">GET</text><text x="1404.36" y="1532.38" font-size="27.93" fill="#333" textLength="241.48" lengthAdjust="spacingAndGlyphs">https://example.com</text><text x="1787.36" y="1532.38" font-size="27.91" fill="#333">31</text><text x="2550.97" y="1532.38" font-size="27.62" fill="#1b72d4">OpenAPI</text><text x="643.56" y="1622.21" font-size="27.93" fill="#333" letter-spacing="-0.35">/ready</text><text x="1039.97" y="1622.21" font-size="27.62" fill="#222" textLength="77.66" lengthAdjust="spacingAndGlyphs">HEAD</text><text x="1404.36" y="1622.21" font-size="27.93" fill="#333" textLength="241.48" lengthAdjust="spacingAndGlyphs">https://example.com</text><text x="2550.97" y="1622.21" font-size="27.62" fill="#1b72d4">OpenAPI</text><text x="643.56" y="1712.04" font-size="27.93" fill="#333" letter-spacing="-0.35">/api_protection</text><text x="1042.37" y="1712.04" font-size="27.62" fill="#222" textLength="50.86" lengthAdjust="spacingAndGlyphs">GET</text><text x="1404.36" y="1712.04" font-size="27.93" fill="#333" textLength="241.48" lengthAdjust="spacingAndGlyphs">https://example.com</text><text x="1787.36" y="1712.04" font-size="27.91" fill="#333">32</text><text x="2550.97" y="1712.04" font-size="27.62" fill="#1b72d4">OpenAPI</text><defs><linearGradient id="sh" x1="0" x2="1"><stop offset="0" stop-color="#000" stop-opacity="0.47"/><stop offset="0.25" stop-color="#000" stop-opacity="0.25"/><stop offset="0.6" stop-color="#000" stop-opacity="0.07"/><stop offset="1" stop-color="#000" stop-opacity="0"/></linearGradient></defs><rect x="611" y="0" width="17" height="1696" fill="url(#sh)"/><defs><filter id="tbs" x="-10%" y="-50%" width="120%" height="200%"><feGaussianBlur stdDeviation="3"/></filter></defs><rect x="928" y="1660" width="843" height="80" rx="26" fill="#000" opacity="0.10" filter="url(#tbs)"/><rect x="929.3" y="1661.8" width="840.4" height="80" rx="25" fill="#fff" stroke="#e4e4e4" stroke-width="1.2"/><rect x="945.3" y="1677.8" width="63.5" height="60" rx="9" fill="#0a95ff"/><circle cx="965" cy="1700" r="6" fill="#fff"/><rect x="1080" y="1693" width="2.2" height="10" fill="#222"/><rect x="1099" y="1693" width="2.2" height="10" fill="#222"/><rect x="1190" y="1693.5" width="30" height="10" rx="3" fill="#222"/><path d="M1304 1696 Q1307 1692 1312 1694" fill="none" stroke="#222" stroke-width="2"/><path d="M1500 1700 A8 8 0 0 1 1516 1700" fill="none" stroke="#222" stroke-width="2.4"/><path d="M1580 1700 Q1588 1690 1594 1697 Q1600 1690 1608 1700" fill="none" stroke="#222" stroke-width="2.4"/><rect x="1640.6" y="1661.8" width="1.6" height="40" fill="#e0e0e0"/><rect x="1667.8" y="1686" width="78.6" height="30" rx="8" fill="#efefef"/><rect x="1669" y="1687" width="40" height="28" rx="7" fill="#fff" stroke="#e5e5e5"/>
<text x="795.64" y="115.00" font-size="65.41" fill="#333" textLength="377.32" lengthAdjust="spacingAndGlyphs">API Inventory</text><text x="1197.35" y="110.70" font-size="28.34" font-style="italic" fill="#6b6b6b" textLength="295.70" lengthAdjust="spacingAndGlyphs">Found 52 out of 64 results</text><text x="678.00" y="278.00" font-size="33.43" font-weight="bold" fill="#333" textLength="202.01" lengthAdjust="spacingAndGlyphs">APIs per cloud</text><text x="1494.00" y="278.00" font-size="33.43" font-weight="bold" fill="#333" textLength="225.01" lengthAdjust="spacingAndGlyphs">APIs per service</text><text x="2310.60" y="278.00" font-size="33.43" font-weight="bold" fill="#333" textLength="239.61" lengthAdjust="spacingAndGlyphs">Internet exposed</text><text x="806.78" y="550.00" font-size="40.70" fill="#333" stroke="#333" stroke-width="1.1" textLength="62.24" lengthAdjust="spacingAndGlyphs">142</text><text x="820.59" y="574.90" font-size="13.81" fill="#333" stroke="#333" stroke-width="0.3" textLength="40.43" lengthAdjust="spacingAndGlyphs" letter-spacing="3">APIs</text><text x="1623.38" y="550.00" font-size="40.70" fill="#333" stroke="#333" stroke-width="1.1" textLength="62.24" lengthAdjust="spacingAndGlyphs">142</text><text x="1637.19" y="574.90" font-size="13.81" fill="#333" stroke="#333" stroke-width="0.3" textLength="40.43" lengthAdjust="spacingAndGlyphs" letter-spacing="3">APIs</text><text x="2437.38" y="549.70" font-size="40.70" fill="#333" stroke="#333" stroke-width="1.1" textLength="68.04" lengthAdjust="spacingAndGlyphs">328</text><text x="2452.79" y="574.40" font-size="13.81" fill="#333" stroke="#333" stroke-width="0.3" textLength="40.63" lengthAdjust="spacingAndGlyphs" letter-spacing="3">APIs</text><text x="1072.06" y="470.70" font-size="24.71" fill="#333" stroke="#333" stroke-width="0.75" textLength="25.68" lengthAdjust="spacingAndGlyphs">32</text><text x="1198.26" y="470.70" font-size="24.71" fill="#333" textLength="53.48" lengthAdjust="spacingAndGlyphs">AWS</text><text x="1072.06" y="525.00" font-size="24.71" fill="#333" stroke="#333" stroke-width="0.75" textLength="27.08" lengthAdjust="spacingAndGlyphs">65</text><text x="1197.26" y="525.00" font-size="24.71" fill="#333" textLength="49.08" lengthAdjust="spacingAndGlyphs">GCP</text><text x="1072.06" y="578.60" font-size="24.71" fill="#333" stroke="#333" stroke-width="0.75" textLength="27.68" lengthAdjust="spacingAndGlyphs">38</text><text x="1198.26" y="578.60" font-size="24.71" fill="#333" textLength="62.48" lengthAdjust="spacingAndGlyphs">Azure</text><text x="1072.06" y="632.00" font-size="24.71" fill="#333" stroke="#333" stroke-width="0.75" textLength="11.48" lengthAdjust="spacingAndGlyphs">7</text><text x="1197.26" y="632.00" font-size="24.71" fill="#333" textLength="64.68" lengthAdjust="spacingAndGlyphs">Other</text><text x="1888.66" y="470.70" font-size="24.71" fill="#333" stroke="#333" stroke-width="0.75" textLength="25.68" lengthAdjust="spacingAndGlyphs">32</text><text x="2014.86" y="470.70" font-size="24.71" fill="#333" textLength="73.88" lengthAdjust="spacingAndGlyphs">Apigee</text><text x="1888.66" y="525.00" font-size="24.71" fill="#333" stroke="#333" stroke-width="0.75" textLength="27.08" lengthAdjust="spacingAndGlyphs">65</text><text x="2014.86" y="525.00" font-size="24.71" fill="#333" textLength="117.88" lengthAdjust="spacingAndGlyphs">AWS API...</text><text x="1888.66" y="578.60" font-size="24.71" fill="#333" stroke="#333" stroke-width="0.75" textLength="27.68" lengthAdjust="spacingAndGlyphs">38</text><text x="2014.86" y="578.60" font-size="24.71" fill="#333" textLength="61.88" lengthAdjust="spacingAndGlyphs">APIM</text><text x="1888.66" y="632.00" font-size="24.71" fill="#333" stroke="#333" stroke-width="0.75" textLength="11.48" lengthAdjust="spacingAndGlyphs">7</text><text x="2013.86" y="632.00" font-size="24.71" fill="#333" textLength="64.88" lengthAdjust="spacingAndGlyphs">Other</text><text x="641.89" y="890.00" font-size="23.55" font-weight="bold" fill="#6b6b6b" textLength="69.81" lengthAdjust="spacingAndGlyphs" letter-spacing="3.5">PATH</text><text x="1023.49" y="890.00" font-size="23.55" font-weight="bold" fill="#6b6b6b" textLength="190.41" lengthAdjust="spacingAndGlyphs" letter-spacing="3.5">HTTP METHOD</text><text x="1405.49" y="890.00" font-size="23.55" font-weight="bold" fill="#6b6b6b" textLength="98.01" lengthAdjust="spacingAndGlyphs" letter-spacing="3.5">SERVER</text><text x="1787.49" y="890.00" font-size="23.55" font-weight="bold" fill="#6b6b6b" textLength="142.41" lengthAdjust="spacingAndGlyphs" letter-spacing="3.5">INSPECTED</text><text x="2169.09" y="890.00" font-size="23.55" font-weight="bold" fill="#6b6b6b" textLength="182.21" lengthAdjust="spacingAndGlyphs" letter-spacing="3.5">RISK FACTORS</text><text x="2550.69" y="890.00" font-size="23.55" font-weight="bold" fill="#6b6b6b" textLength="97.51" lengthAdjust="spacingAndGlyphs" letter-spacing="3.5">API SPE</text><text x="171.26" y="75.00" font-size="24.71" fill="#6e6e6e" stroke="#6e6e6e" stroke-width="0.5" textLength="234.48" lengthAdjust="spacingAndGlyphs" letter-spacing="3.5">ASSET INVENTORY</text><text x="188.95" y="180.30" font-size="28.49" font-weight="bold" font-style="italic" fill="#2d2d2d" textLength="108.91" lengthAdjust="spacingAndGlyphs">All Assets</text><text x="188.75" y="258.60" font-size="28.49" font-weight="bold" font-style="italic" fill="#2d2d2d" textLength="103.31" lengthAdjust="spacingAndGlyphs">Compute</text><text x="188.15" y="581.80" font-size="28.49" font-weight="bold" font-style="italic" fill="#2d2d2d" textLength="98.11" lengthAdjust="spacingAndGlyphs">Network</text><text x="188.15" y="663.00" font-size="28.49" font-weight="bold" font-style="italic" fill="#2d2d2d" textLength="56.91" lengthAdjust="spacingAndGlyphs">Data</text><text x="188.15" y="743.60" font-size="28.49" font-weight="bold" font-style="italic" fill="#2d2d2d" textLength="87.71" lengthAdjust="spacingAndGlyphs">Identity</text><text x="189.15" y="824.40" font-size="28.49" font-weight="bold" font-style="italic" fill="#2d2d2d" textLength="24.11" lengthAdjust="spacingAndGlyphs">AI</text><text x="188.15" y="905.50" font-size="28.49" font-weight="bold" font-style="italic" fill="#2d2d2d" textLength="190.71" lengthAdjust="spacingAndGlyphs">Security Services</text><text x="189.15" y="985.50" font-size="28.49" font-weight="bold" font-style="italic" fill="#2d2d2d" textLength="51.71" lengthAdjust="spacingAndGlyphs">APIs</text><text x="188.15" y="1066.50" font-size="28.49" font-weight="bold" font-style="italic" fill="#2d2d2d" textLength="58.71" lengthAdjust="spacingAndGlyphs">Code</text><text x="207.35" y="339.30" font-size="28.49" font-style="italic" fill="#333" textLength="42.91" lengthAdjust="spacingAndGlyphs">K8s</text><text x="206.55" y="420.00" font-size="28.49" font-style="italic" fill="#333" textLength="111.11" lengthAdjust="spacingAndGlyphs">Serverless</text><text x="205.55" y="501.00" font-size="28.49" font-style="italic" fill="#333" textLength="58.11" lengthAdjust="spacingAndGlyphs">CaaS</text><text x="40.15" y="1583.60" font-size="28.49" font-weight="bold" fill="#fff" textLength="39.71" lengthAdjust="spacingAndGlyphs" letter-spacing="9">IL</text><text x="49.35" y="1496.00" font-size="21.80" font-weight="bold" fill="#fff">?</text>
</svg></body></html>
